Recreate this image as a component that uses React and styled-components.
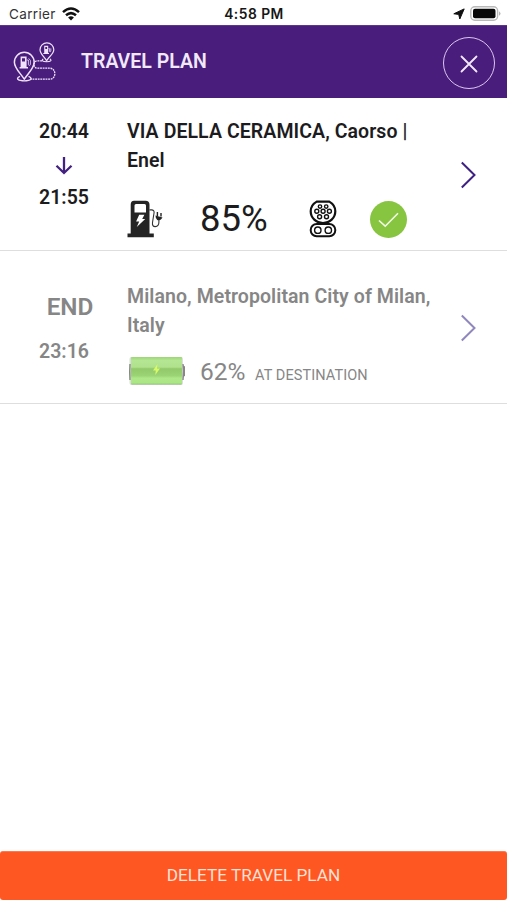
import React from "react";
import styled, { createGlobalStyle } from "styled-components";

const GlobalStyle = createGlobalStyle`
  * { box-sizing: border-box; }
  body { margin: 0; background: #fff; font-family: Roboto, "Liberation Sans", sans-serif; color: #1c1c1e; }
`;

const Screen = styled.div`
  display: flex;
  flex-direction: column;
  width: 507px;
  height: 900px;
  background: #fff;
  overflow: hidden;
`;

const StatusBar = styled.div`
  display: grid;
  grid-template-columns: 1fr auto 1fr;
  align-items: center;
  flex: none;
  height: 25px;
  padding: 2px 6px 0 9px;
  font-family: Inter, "Liberation Sans", sans-serif;
  font-size: 13.5px;
  color: #161616;
`;

const StatusGroup = styled.div`
  display: flex;
  align-items: center;
  gap: ${(p) => p.$gap}px;
  justify-content: ${(p) => (p.$end ? "flex-end" : "flex-start")};
`;

const Carrier = styled.span`
  letter-spacing: 0.35px;
  color: #333;
`;

const Clock = styled.span`
  margin-right: 2px;
  font-size: 13.8px;
  font-weight: 600;
  letter-spacing: 0.5px;
`;

const Header = styled.header`
  display: flex;
  align-items: center;
  flex: none;
  height: 73px;
  padding: 0 12px 0 12px;
  background: #491d7c;
  border-top: 1px solid #5b3689;
`;

const Title = styled.h1`
  flex: 1;
  margin: 0 0 0 23px;
  font-size: 19.5px;
  line-height: 24px;
  font-weight: 600;
  color: #f1e8fa;
`;

const CloseButton = styled.button`
  display: flex;
  align-items: center;
  justify-content: center;
  width: 52px;
  height: 52px;
  margin-top: 2px;
  padding: 1px 1px 0 0;
  border: 1.5px solid #dcc6f0;
  border-radius: 50%;
  background: none;
`;

const Stop = styled.section`
  display: grid;
  grid-template-columns: 127px 1fr 55px;
  flex: none;
  height: 153px;
  border-bottom: 1px solid #dedede;
  color: ${(p) => (p.$muted ? "#868686" : "#1c1c1e")};
`;

const Times = styled.div`
  display: flex;
  flex-direction: column;
  align-items: center;
  padding: ${(p) => p.$top}px 0 0 1px;
`;

const Time = styled.span`
  font-size: 19.5px;
  line-height: 24px;
  font-weight: 600;
`;

const EndLabel = styled.span`
  margin: 0 0 19px 12px;
  font-size: 24.3px;
  line-height: 28px;
  font-weight: 600;
`;

const Details = styled.div`
  display: flex;
  flex-direction: column;
  padding-top: ${(p) => p.$top}px;
`;

const Place = styled.h2`
  margin: 0;
  font-size: 19.5px;
  line-height: 29px;
  font-weight: 600;
  letter-spacing: 0.08px;
`;

const ChargeRow = styled.div`
  display: flex;
  align-items: center;
  height: 44px;
  margin-top: ${(p) => p.$top}px;
`;

const Percent = styled.span`
  width: ${(p) => p.$width}px;
  margin-left: ${(p) => p.$left}px;
  font-size: ${(p) => p.$size}px;
  line-height: 44px;
  white-space: nowrap;
`;

const Caption = styled.span`
  padding-top: 6px;
  font-size: 14.5px;
  letter-spacing: 0.1px;
`;

const Check = styled.span`
  display: flex;
  align-items: center;
  justify-content: center;
  width: 37px;
  height: 37px;
  margin: 1px 0 0 33px;
  border-radius: 50%;
  background: #87c540;
`;

const Next = styled.div`
  display: flex;
  align-items: center;
  padding: 0 0 0 8px;
  margin-top: 2px;
  color: ${(p) => (p.$muted ? "#9087bd" : "#3e2183")};
`;

const Spacer = styled.div`
  flex: 1;
`;

const DeleteButton = styled.button`
  flex: none;
  height: 49px;
  padding: 0 0 3px;
  border: 0;
  border-top: 1px solid #ff774d;
  border-radius: 3px;
  background: #ff5722;
  color: #ffe1d6;
  font-family: inherit;
  font-size: 17.2px;
`;

const Wifi = () => (
  <svg width="18" height="14" viewBox="0 0 18 14" fill="none" stroke="#111" strokeWidth="2.5">
    <path d="M1 5.1Q9-2.2 17 5.1" />
    <path d="M4 8.3Q9 3.9 14 8.3" />
    <path d="M9 13.5 6.1 10.4Q9 8.2 11.9 10.4Z" fill="#111" stroke="none" />
  </svg>
);

const LocationArrow = () => (
  <svg width="12" height="12" viewBox="0 0 12 12">
    <path d="M11.2.9 6.8 11 5.7 6.4.8 5.8Z" fill="#111" stroke="#111" strokeWidth="1" strokeLinejoin="round" />
  </svg>
);

const PhoneBattery = () => (
  <svg width="31" height="15" viewBox="0 0 31 15">
    <rect x=".8" y=".8" width="26.8" height="13.4" rx="4" fill="#fff" stroke="#b9b9b9" strokeWidth="1.4" />
    <rect x="3" y="2.7" width="22.5" height="9.6" rx="2" fill="#080808" />
    <path d="M29 5.2Q32 7.5 29 9.8Z" fill="#b5b5b5" />
  </svg>
);

const RouteIcon = () => (
  <svg width="46" height="44" viewBox="0 -1 46 44" fill="none" stroke="#f0e2fb">
    <path d="M12.3 38.2C8 31.6 2.4 27.1 2.4 21.2a9.9 9.9 0 0 1 19.8 0C22.2 27.1 16.5 31.6 12.3 38.2Z" strokeWidth="1.5" />
    <path d="M8 35.3c-3.2 1-3.4 3.2.3 4.1 2.5.6 5.7.6 8.2 0 3.6-.9 3.2-3.1 0-4.1" strokeWidth="1.4" />
    <path d="M34.6 19.7C32.5 15.7 28 12.9 28 8.7a6.9 6.9 0 0 1 13.8 0c0 4.2-5 7-7.2 11Z" strokeWidth="1.2" />
    <path d="M31.3 18.1c-2.3 1.3-.8 2.7 3.3 2.7s5.6-1.4 3.3-2.7" strokeWidth="1.1" />
    <path d="M30 19.8h-4.2c-5.2 0-5.2 7.4 0 7.4h12c6.7 0 6.7 11 0 11H19" strokeWidth="1.3" strokeDasharray="1.9 .7" />
    <path fill="#f0e2fb" stroke="none" fillRule="evenodd" d="M8.6 15.5h6V26H16v1.5H7.6V26h1ZM10 17.2v3.2h3v-3.2ZM32.2 4.8h4V12h.8v1h-5.7v-1h.9ZM33.3 5.9V8h1.8V5.9Z" />
    <path d="M14.7 19h1.7v4.4c0 1.3 2 1.3 2 0v-4l-1.7-2M36.4 7.4h1V10c0 1 1.4 1 1.4 0V7.4" strokeWidth=".8" />
  </svg>
);

const CloseIcon = () => (
  <svg width="18" height="18" viewBox="0 0 18 18" fill="none" stroke="#f3e8fb" strokeWidth="1.8" strokeLinecap="round">
    <path d="M1.5 1.5 16.5 16.5M16.5 1.5 1.5 16.5" />
  </svg>
);

const DownArrow = styled(({ className }) => (
  <svg className={className} width="18" height="20" viewBox="0 0 18 20" fill="none" stroke="#43217f" strokeWidth="2.3">
    <path d="M9 1V17.2M1.5 9.7 9 17 16.5 9.7" />
  </svg>
))`
  margin: 12px 0 10px;
`;

const Pump = () => (
  <svg width="37" height="38" viewBox="0 0 37 38">
    <path
      fill="#242424"
      fillRule="evenodd"
      d="M7 .8H18.5Q22.5.8 22.5 4.8V33.5H26.8V37.3H.5V33.5H3.7V4.8Q3.7.8 7 .8ZM9 3.9Q7.5 3.9 7.5 5.4V12.4H19V5.4Q19 3.9 17.5 3.9Z"
    />
    <path fill="#fff" d="M12.2 14.8h5.2l-2.2 4.3h3L9.8 26.9l2.4-5.5H9.1Z" />
    <path d="M22.5 9.9h2.2Q27.2 9.9 27.1 12.5L25.5 22.5Q25 26.6 28.2 26.6 31.9 26.6 31.9 22V19" fill="none" stroke="#333" strokeWidth="1.1" />
    <path d="M30.4 12v4M34 13v3.5" stroke="#242424" strokeWidth="1.4" />
    <path d="M28.5 15.5 35.5 17.4 34.4 19.1Q32.5 21 30.2 20Q28.5 18.5 28.5 15.5Z" fill="#242424" />
  </svg>
);

const Connector = () => (
  <svg width="28" height="38" viewBox="0 0 28 38" fill="none" stroke="#111">
    <path d="M7.7 1.6H20.3Q26.3 5 26.3 11.3C26.3 18 20.8 23 14 23S1.7 18 1.7 11.3Q1.7 5 7.7 1.6Z" strokeWidth="2.2" />
    <rect x="1.7" y="24" width="24.6" height="12.3" rx="6" strokeWidth="2" />
    <g strokeWidth="1.4">
      <circle cx="11" cy="6.6" r="1.7" />
      <circle cx="17.2" cy="6.6" r="1.7" />
      <circle cx="7.8" cy="11.2" r="2" />
      <circle cx="14.1" cy="11.2" r="2" />
      <circle cx="20.4" cy="11.2" r="2" />
      <circle cx="10.6" cy="16.8" r="2" />
      <circle cx="17.5" cy="16.8" r="2" />
      <circle cx="8.8" cy="30.2" r="3.2" />
      <circle cx="19.3" cy="30.2" r="3.2" />
    </g>
  </svg>
);

const CheckIcon = () => (
  <svg width="21" height="16" viewBox="0 0 21 16" fill="none" stroke="#f1fae6" strokeWidth="1.6">
    <path d="M1 8.5 7.2 14.2 20 1.3" />
  </svg>
);

const CarBattery = () => (
  <svg width="58" height="32" viewBox="0 1 58 32">
    <defs>
      <linearGradient id="cell" x2="0" y2="1">
        <stop stopColor="#9cd576" />
        <stop offset=".13" stopColor="#b4e693" />
        <stop offset=".37" stopColor="#b0e18d" />
        <stop offset=".43" stopColor="#91c96b" />
        <stop offset=".68" stopColor="#9bd474" />
        <stop offset=".77" stopColor="#afe78a" />
        <stop offset=".95" stopColor="#aae684" />
        <stop offset="1" stopColor="#8bbb70" />
      </linearGradient>
    </defs>
    <path d="M55 9.5 58 11.5V20.5L55 24Z" fill="#8a8585" />
    <rect x="2.5" y="2" width="53.5" height="28" rx="2" fill="#ddd" />
    <path d="M3 9Q2.4 16 3 25M56 9Q57 16 56 25" stroke="#888" strokeWidth="1.4" fill="none" />
    <rect x="4" y="2" width="51" height="27.5" rx="1" fill="url(#cell)" />
    <path d="M30.5 9 26 15.5H28.8L28.3 20 33 13.6H30Z" fill="#d6fa68" />
  </svg>
);

const Chevron = () => (
  <svg width="16" height="28" viewBox="0 0 16 28" fill="none" stroke="currentColor" strokeWidth="2">
    <path d="M1.8 1.5 14.5 14 1.8 26.5" />
  </svg>
);

const ConnectorSlot = styled.span`
  display: flex;
`;

export default function App() {
  return (
    <Screen>
      <GlobalStyle />
      <StatusBar>
        <StatusGroup $gap={6}>
          <Carrier>Carrier</Carrier>
          <Wifi />
        </StatusGroup>
        <Clock>4:58 PM</Clock>
        <StatusGroup $gap={5} $end>
          <LocationArrow />
          <PhoneBattery />
        </StatusGroup>
      </StatusBar>
      <Header>
        <RouteIcon />
        <Title>TRAVEL PLAN</Title>
        <CloseButton aria-label="Close">
          <CloseIcon />
        </CloseButton>
      </Header>
      <Stop>
        <Times $top={22}>
          <Time>20:44</Time>
          <DownArrow />
          <Time>21:55</Time>
        </Times>
        <Details $top={19}>
          <Place>VIA DELLA CERAMICA, Caorso |<br />Enel</Place>
          <ChargeRow $top={22}>
            <Pump />
            <Percent $left={36} $width={109} $size={36.5}>85%</Percent>
            <ConnectorSlot>
              <Connector />
            </ConnectorSlot>
            <Check>
              <CheckIcon />
            </Check>
          </ChargeRow>
        </Details>
        <Next>
          <Chevron />
        </Next>
      </Stop>
      <Stop $muted>
        <Times $top={42}>
          <EndLabel>END</EndLabel>
          <Time>23:16</Time>
        </Times>
        <Details $top={31}>
          <Place>Milano, Metropolitan City of Milan,<br />Italy</Place>
          <ChargeRow $top={10}>
            <CarBattery />
            <Percent $left={15} $width={55} $size={24.5}>62%</Percent>
            <Caption>AT DESTINATION</Caption>
          </ChargeRow>
        </Details>
        <Next $muted>
          <Chevron />
        </Next>
      </Stop>
      <Spacer />
      <DeleteButton>DELETE TRAVEL PLAN</DeleteButton>
    </Screen>
  );
}
